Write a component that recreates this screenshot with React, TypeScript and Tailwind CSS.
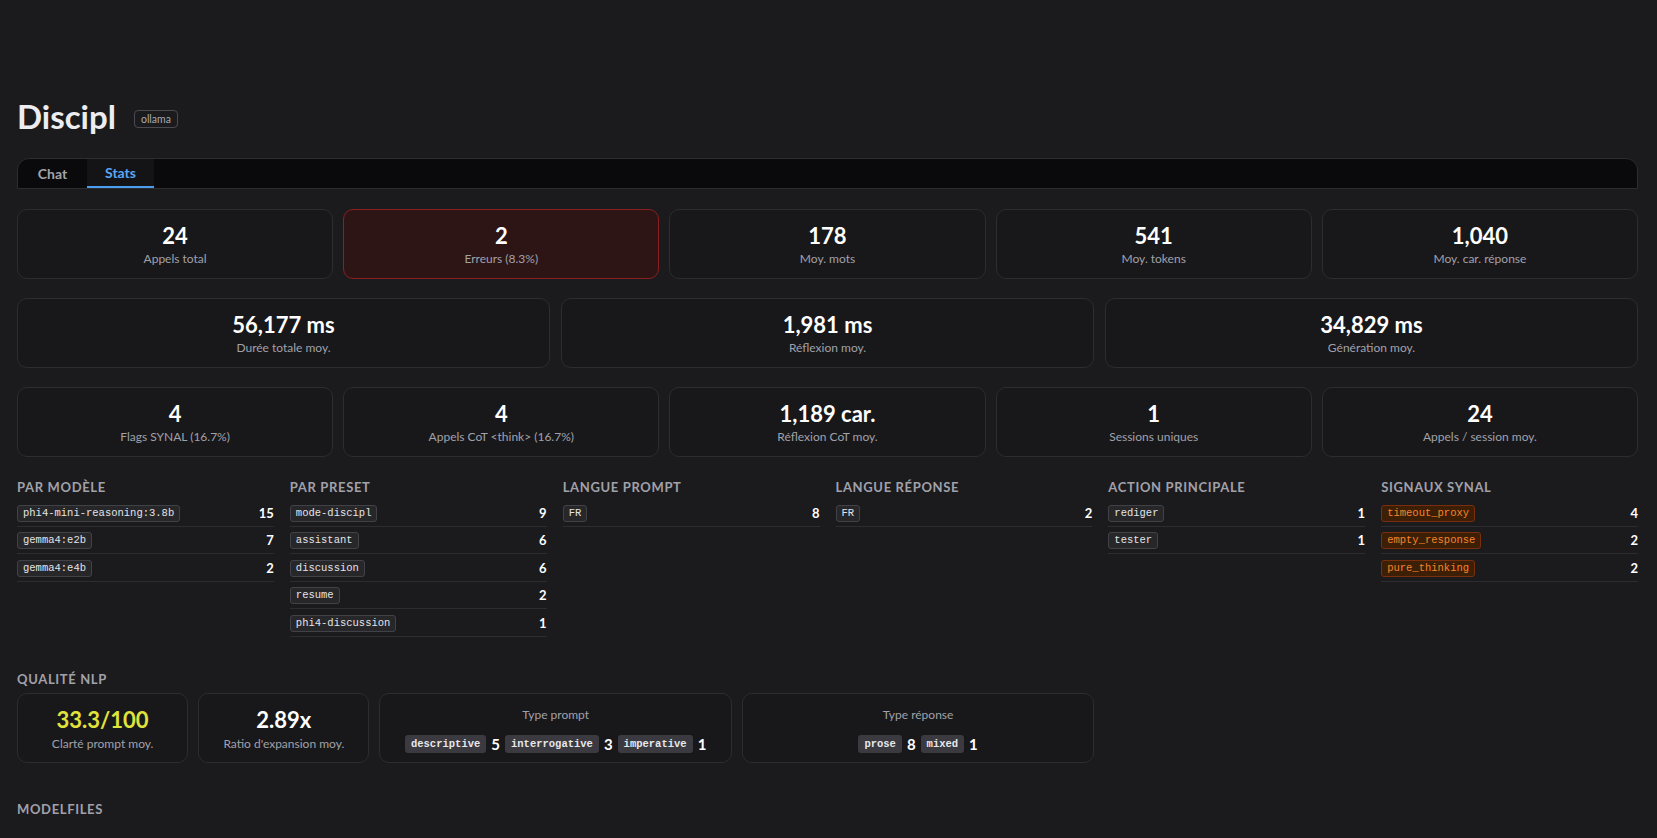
const sans = { fontFamily: "Lato, 'Open Sans', sans-serif" };
const mono = { fontFamily: "'Liberation Mono', 'DejaVu Sans Mono', monospace" };

type Stat = { value: string; label: string; danger?: boolean };

const row1: Stat[] = [
  { value: "24", label: "Appels total" },
  { value: "2", label: "Erreurs (8.3%)", danger: true },
  { value: "178", label: "Moy. mots" },
  { value: "541", label: "Moy. tokens" },
  { value: "1,040", label: "Moy. car. réponse" },
];

const row2: Stat[] = [
  { value: "56,177 ms", label: "Durée totale moy." },
  { value: "1,981 ms", label: "Réflexion moy." },
  { value: "34,829 ms", label: "Génération moy." },
];

const row3: Stat[] = [
  { value: "4", label: "Flags SYNAL (16.7%)" },
  { value: "4", label: "Appels CoT <think> (16.7%)" },
  { value: "1,189 car.", label: "Réflexion CoT moy." },
  { value: "1", label: "Sessions uniques" },
  { value: "24", label: "Appels / session moy." },
];

type Breakdown = { title: string; items: [string, number][]; warn?: boolean };

const breakdowns: Breakdown[] = [
  {
    title: "Par modèle",
    items: [
      ["phi4-mini-reasoning:3.8b", 15],
      ["gemma4:e2b", 7],
      ["gemma4:e4b", 2],
    ],
  },
  {
    title: "Par preset",
    items: [
      ["mode-discipl", 9],
      ["assistant", 6],
      ["discussion", 6],
      ["resume", 2],
      ["phi4-discussion", 1],
    ],
  },
  { title: "Langue prompt", items: [["FR", 8]] },
  { title: "Langue réponse", items: [["FR", 2]] },
  {
    title: "Action principale",
    items: [
      ["rediger", 1],
      ["tester", 1],
    ],
  },
  {
    title: "Signaux SYNAL",
    warn: true,
    items: [
      ["timeout_proxy", 4],
      ["empty_response", 2],
      ["pure_thinking", 2],
    ],
  },
];

export default function App() {
  return (
    <div
      className="min-h-screen bg-[#1b1b1e] pl-[17px] pr-[19px] pt-[96px] pb-10 text-white"
      style={sans}
    >
      {/* Header */}
      <div className="flex items-center gap-[18px]">
        <h1 className="text-[33px] leading-[40px] font-bold text-[#ececf1]">Discipl</h1>
        <span className="mt-[6px] rounded-[4px] border border-[#4a4a50] px-[6px] text-[10.5px] leading-[16px] text-[#a8a8b0]">
          ollama
        </span>
      </div>

      {/* Tabs */}
      <div className="mt-[22px] flex h-[31px] rounded-t-xl border border-[#2c2c31] bg-[#0a0a0c] overflow-hidden">
        <button className="w-[69px] text-[14px] font-bold text-[#a3a3ab]">Chat</button>
        <button className="w-[67px] border-b-2 border-[#4a9ef0] bg-[#141417] text-[14px] font-bold text-[#5aa6f2]">
          Stats
        </button>
      </div>

      {/* Stat cards */}
      <div className="mt-[20px] flex flex-col gap-[19px]">
        <div className="grid grid-cols-5 gap-[10px]">
          {row1.map((s) => (
            <StatCard key={s.label} {...s} />
          ))}
        </div>
        <div className="grid grid-cols-3 gap-[11px]">
          {row2.map((s) => (
            <StatCard key={s.label} {...s} />
          ))}
        </div>
        <div className="grid grid-cols-5 gap-[10px]">
          {row3.map((s) => (
            <StatCard key={s.label} {...s} />
          ))}
        </div>
      </div>

      {/* Breakdown lists */}
      <div className="mt-[21px] grid grid-cols-6 gap-4">
        {breakdowns.map((b) => (
          <div key={b.title}>
            <SectionTitle>{b.title}</SectionTitle>
            <div className="mt-[3px]">
              {b.items.map(([name, count]) => (
                <div
                  key={name}
                  className="flex items-center justify-between border-b border-[#2c2c31] pt-[5.5px] pb-[4px]"
                >
                  <Tag warn={b.warn}>{name}</Tag>
                  <span className="text-[13px] font-bold leading-[17px] text-white">{count}</span>
                </div>
              ))}
            </div>
          </div>
        ))}
      </div>

      {/* NLP quality */}
      <div className="mt-[33px]">
        <SectionTitle>Qualité NLP</SectionTitle>
        <div className="mt-[5px] grid grid-cols-9 gap-[10px]">
          <div className="rounded-[10px] border border-[#2c2c31] bg-[#18181b] pt-3 pb-[10px] text-center">
            <div className="text-[22px] font-bold leading-7 text-[#e0e33a]">33.3/100</div>
            <div className="mt-[2px] text-[12px] leading-4 text-[#a1a1aa]">Clarté prompt moy.</div>
          </div>
          <div className="rounded-[10px] border border-[#2c2c31] bg-[#18181b] pt-3 pb-[10px] text-center">
            <div className="text-[22px] font-bold leading-7 text-white">2.89x</div>
            <div className="mt-[2px] text-[12px] leading-4 text-[#a1a1aa]">Ratio d'expansion moy.</div>
          </div>
          <TypeCard
            label="Type prompt"
            items={[
              ["descriptive", 5],
              ["interrogative", 3],
              ["imperative", 1],
            ]}
          />
          <TypeCard
            label="Type réponse"
            items={[
              ["prose", 8],
              ["mixed", 1],
            ]}
          />
        </div>
      </div>

      <div className="mt-[37px]">
        <SectionTitle>Modelfiles</SectionTitle>
      </div>
    </div>
  );
}

/* ---------- small pieces ---------- */

function StatCard({ value, label, danger }: Stat) {
  return (
    <div
      className={`rounded-[10px] border pt-3 pb-[11px] text-center ${
        danger ? "border-[#8a1f22] bg-[#2d1516]" : "border-[#2c2c31] bg-[#18181b]"
      }`}
    >
      <div className="text-[22px] font-bold leading-7 text-white">{value}</div>
      <div className="mt-[1px] text-[12px] leading-4 text-[#a1a1aa]">{label}</div>
    </div>
  );
}

function SectionTitle({ children }: { children: React.ReactNode }) {
  return (
    <h2 className="text-[13px] font-bold uppercase leading-[18px] tracking-[0.05em] text-[#a1a1aa]">
      {children}
    </h2>
  );
}

function Tag({ children, warn }: { children: React.ReactNode; warn?: boolean }) {
  return (
    <span
      className={`rounded-[3px] border px-[5px] text-[10.5px] leading-[15px] ${
        warn
          ? "border-[#7a2e0e] bg-[#3d1f06] text-[#f5842c]"
          : "border-[#414148] bg-[#27272a] text-[#e4e4e8]"
      }`}
      style={mono}
    >
      {children}
    </span>
  );
}

function TypeCard({ label, items }: { label: string; items: [string, number][] }) {
  return (
    <div className="col-span-2 flex flex-col items-center rounded-[10px] border border-[#2c2c31] bg-[#18181b] pt-[13px] pb-[9px]">
      <div className="text-[12px] leading-4 text-[#a1a1aa]">{label}</div>
      <div className="mt-[12px] flex items-center gap-[5px]">
        {items.map(([name, count]) => (
          <div key={name} className="flex items-center gap-[5px]">
            <span
              className="rounded-[3px] bg-[#3a3a40] px-[6px] text-[10.5px] font-bold leading-[18px] text-[#e8e8ec]"
              style={mono}
            >
              {name}
            </span>
            <span className="text-[15px] font-bold leading-[18px] text-white">{count}</span>
          </div>
        ))}
      </div>
    </div>
  );
}
